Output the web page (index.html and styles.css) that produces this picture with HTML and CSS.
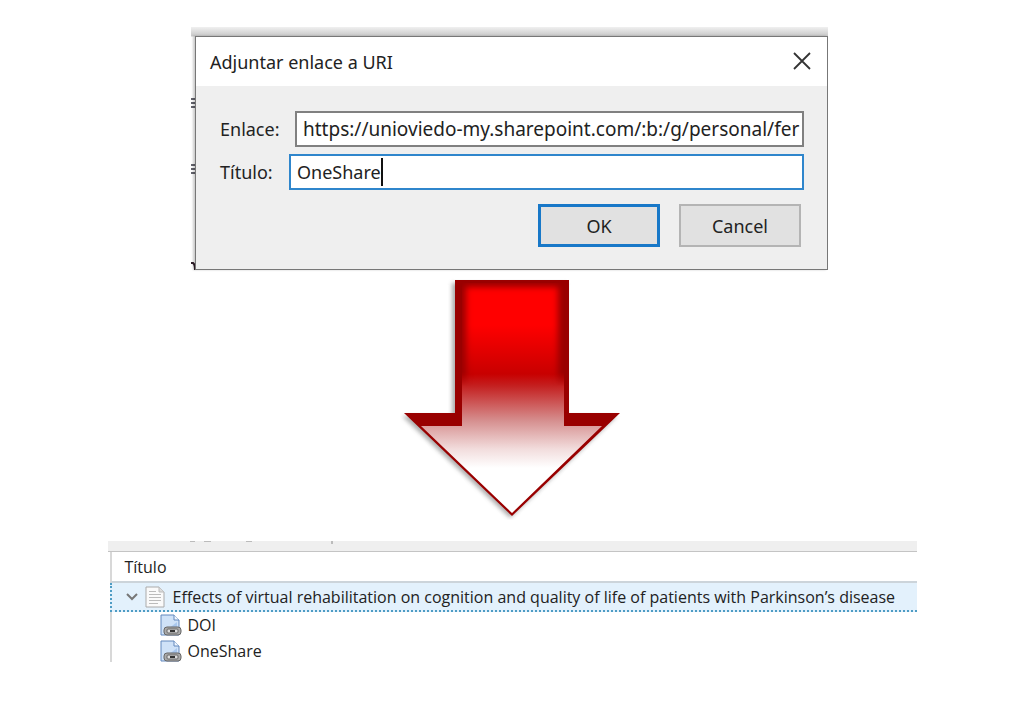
FILE: index.html
```html
<!DOCTYPE html>
<html lang="es">
<head>
    <meta charset="UTF-8">
    <meta name="viewport" content="width=device-width, initial-scale=1.0">
    <title>Adjuntar enlace a URI</title>
    <link rel="stylesheet" href="styles.css">
</head>
<body>
    <main class="page">
        <!-- Dialog -->
        <section class="backdrop">
            <!-- Window behind the dialog -->
            <svg class="backdrop-text" width="80" height="174" viewBox="0 0 80 174" aria-hidden="true">
                <path d="M0 2h4M0 6h4M0 10h4M0 68h4M0 72h4M0 76h4" stroke="#33333f" stroke-width="1.6"/>
                <path d="M0 166h2q2 1 2 7" fill="none" stroke="#33202c" stroke-width="2"/>
            </svg>
            <form class="dialog">
                <header class="dialog-header">
                    <h1>Adjuntar enlace a URI</h1>
                    <button class="close" type="button" aria-label="Cerrar">
                        <svg width="20" height="20" viewBox="0 0 20 20"><path d="M2 1l16 16M18 1L2 17" stroke="#333" stroke-width="1.8"/></svg>
                    </button>
                </header>
                <div class="dialog-body">
                    <div class="row">
                        <label for="enlace">Enlace:</label>
                        <input class="url" id="enlace" type="text" value="https://unioviedo-my.sharepoint.com/:b:/g/personal/fer">
                    </div>
                    <div class="row row-active">
                        <label for="titulo">Título:</label>
                        <input id="titulo" type="text" value="OneShare">
                        <span class="caret"></span>
                    </div>
                    <div class="actions">
                        <button class="btn btn-default" type="button">OK</button>
                        <button class="btn" type="button">Cancel</button>
                    </div>
                </div>
            </form>
        </section>

        <!-- Arrow -->
        <svg class="arrow" width="224" height="242" viewBox="0 0 224 242" aria-hidden="true">
            <defs>
                <linearGradient id="fill" gradientUnits="userSpaceOnUse" x1="0" y1="2" x2="0" y2="190">
                    <stop offset="0" stop-color="#f00"/>
                    <stop offset="0.24" stop-color="#f00"/>
                    <stop offset="0.5" stop-color="#c80000"/>
                    <stop offset="0.56" stop-color="#c41e1e"/>
                    <stop offset="0.75" stop-color="#d69090"/>
                    <stop offset="0.9" stop-color="#f2dddd"/>
                    <stop offset="1" stop-color="#fff"/>
                </linearGradient>
                <linearGradient id="fade" gradientUnits="userSpaceOnUse" x1="0" y1="94" x2="0" y2="108">
                    <stop offset="0" stop-color="#fff"/>
                    <stop offset="1" stop-color="#000"/>
                </linearGradient>
                <mask id="upper"><rect width="224" height="242" fill="url(#fade)"/></mask>
                <filter id="soft" x="-20%" y="-20%" width="140%" height="140%"><feGaussianBlur stdDeviation="3"/></filter>
                <filter id="shadow" x="-20%" y="-20%" width="140%" height="140%"><feGaussianBlur stdDeviation="2"/></filter>
                <clipPath id="shape"><path d="M55 2h114v133h51L112 238 4 135h51z"/></clipPath>
            </defs>
            <path d="M52 5h114v133h51L110 240 2 138h50z" fill="#777" opacity="0.6" filter="url(#shadow)"/>
            <path d="M55 2h114v133h51L112 238 4 135h51z" fill="#900"/>
            <path d="M62 5h102v143h38L112 235 21 148h41z" fill="url(#fill)"/>
            <g clip-path="url(#shape)" mask="url(#upper)">
                <path d="M50-4h124v120H50zM66 9v107h92V9z" fill="#900" fill-rule="evenodd" filter="url(#soft)"/>
            </g>
        </svg>

        <!-- Item tree -->
        <section class="tree">
            <div class="tree-toolbar">
                <svg width="160" height="3" viewBox="0 0 160 3" aria-hidden="true"><path d="M0 .5h5M14 .5h7M56 .5h6" stroke="#bbb"/><path d="M142 0v3" stroke="#888"/></svg>
            </div>
            <table>
                <thead>
                    <tr><th>Título</th></tr>
                </thead>
                <tbody>
                    <tr class="selected">
                        <td>
                            <div class="item">
                                <svg width="14" height="10" viewBox="0 0 14 10"><path d="M2 2l5 5 5-5" fill="none" stroke="#777" stroke-width="2"/></svg>
                                <svg class="doc" width="20" height="22" viewBox="0 0 20 22">
                                    <path d="M1 1h13l5 5v15H1z" fill="#fafafa" stroke="#aaa"/>
                                    <path d="M14 1v5h5" fill="#ddd" stroke="#bbb"/>
                                    <path d="M4 5.500h7M4 8.500h12M4 11.500h12M4 14.500h12M4 17.500h9" stroke="#bbb"/>
                                </svg>
                                <span>Effects of virtual rehabilitation on cognition and quality of life of patients with Parkinson’s disease</span>
                            </div>
                        </td>
                    </tr>
                    <tr>
                        <td>
                            <div class="item child">
                                <svg width="22" height="24" viewBox="0 0 22 24">
                                    <path d="M1 2h13l5 5v15H1z" fill="#cfe2f8" stroke="#6288bd"/>
                                    <path d="M3 20L17 9v11z" fill="#a9c8ef"/>
                                    <path d="M14 2v5h5" fill="#f0f7ff" stroke="#6288bd"/>
                                    <rect x="4" y="14" width="17" height="8" rx="3" fill="#aaa" stroke="#666"/>
                                    <rect x="7" y="16" width="11" height="4" rx="1" fill="#ddd" stroke="#666"/>
                                    <path d="M10 18h5" stroke="#333" stroke-width="2"/>
                                </svg>
                                <span>DOI</span>
                            </div>
                        </td>
                    </tr>
                    <tr>
                        <td>
                            <div class="item child">
                                <svg width="22" height="24" viewBox="0 0 22 24">
                                    <path d="M1 2h13l5 5v15H1z" fill="#cfe2f8" stroke="#6288bd"/>
                                    <path d="M3 20L17 9v11z" fill="#a9c8ef"/>
                                    <path d="M14 2v5h5" fill="#f0f7ff" stroke="#6288bd"/>
                                    <rect x="4" y="14" width="17" height="8" rx="3" fill="#aaa" stroke="#666"/>
                                    <rect x="7" y="16" width="11" height="4" rx="1" fill="#ddd" stroke="#666"/>
                                    <path d="M10 18h5" stroke="#333" stroke-width="2"/>
                                </svg>
                                <span>OneShare</span>
                            </div>
                        </td>
                    </tr>
                </tbody>
            </table>
        </section>
    </main>
</body>
</html>
```
FILE: styles.css
```css
* {
    box-sizing: border-box;
}

body {
    margin: 0;
    background: #fff;
    color: #222;
    font-family: "Noto Sans", "Open Sans", sans-serif;
    font-size: 18px;
}

input,
button {
    font: inherit;
    color: inherit;
}

.page {
    display: flex;
    flex-direction: column;
    align-items: center;
    padding: 27px 16px;
}

/* Dialog */
.backdrop {
    position: relative;
    width: 100%;
    max-width: 637px;
    padding: 9px 0 0 4px;
    margin-right: 5px;
    background: linear-gradient(#f0f0f0, #c8c8c8 9px, #fff 10px);
}

.backdrop-text {
    position: absolute;
    left: 0;
    top: 70px;
}

.dialog {
    position: relative;
    border: 1px solid #777;
    box-shadow: -2px 0 2px rgba(0, 0, 0, 0.2);
    background: #efefef;
}

.dialog-header {
    display: flex;
    align-items: center;
    justify-content: space-between;
    height: 49px;
    padding: 0 15px 0 14px;
    background: #fff;
}

.dialog-header h1 {
    margin: 0;
    font-size: 18px;
    font-weight: 400;
}

.close {
    display: flex;
    padding: 0;
    border: none;
    background: none;
}

.dialog-body {
    padding: 25px 23px 22px 24px;
}

.row {
    position: relative;
    display: flex;
    align-items: center;
    gap: 8px;
    margin-bottom: 7px;
}

.row label {
    flex: 0 0 67px;
}

.row input {
    flex: 1;
    min-width: 0;
    height: 36px;
    padding: 0 0 0 6px;
    border: 2px solid #808080;
    background: #fff;
}

.row .url {
    font-size: 19px;
}

.row-active label {
    flex-basis: 61px;
}

.row-active input {
    border-color: #2f86cc;
}

.caret {
    position: absolute;
    left: 161px;
    top: 4px;
    width: 2px;
    height: 28px;
    background: #111;
}

.actions {
    display: flex;
    justify-content: flex-end;
    gap: 19px;
    padding: 7px 3px 0 0;
}

.btn {
    width: 122px;
    height: 43px;
    padding: 0;
    border: 2px solid #b4b4b4;
    background: #e1e1e1;
}

.btn-default {
    border: 3px solid #1878c8;
}

.arrow {
    margin: 8px 0 21px;
}

/* Item tree */
.tree {
    width: 100%;
    max-width: 809px;
    height: 121px;
    overflow: hidden;
    font-family: "Open Sans", "Noto Sans", sans-serif;
    font-size: 16px;
}

.tree-toolbar {
    height: 11px;
    padding-left: 82px;
    border-bottom: 1px solid #c4c4c4;
    background: #efefef;
}

.tree-toolbar svg {
    display: block;
}

.tree table {
    width: 100%;
    padding-left: 2px;
    border-spacing: 0;
}

.tree th,
.tree td {
    height: 26px;
    padding: 0;
    border-left: 2px solid #d8d8d8;
}

.tree th {
    height: 31px;
    padding-left: 13px;
    border-bottom: 2px solid #ccd4da;
    font-weight: 400;
    text-align: left;
}

.tree .selected td {
    height: 29px;
    border-left: 2px dotted #4e9cc4;
    border-bottom: 2px dotted #4e9cc4;
    background: #e3f1fc;
}

.item {
    display: flex;
    align-items: center;
    gap: 6px;
    height: 26px;
    padding-left: 13px;
    white-space: nowrap;
}

.item svg {
    flex: none;
}

.item .doc {
    margin-right: 2px;
}

.child {
    padding-left: 48px;
}
```
